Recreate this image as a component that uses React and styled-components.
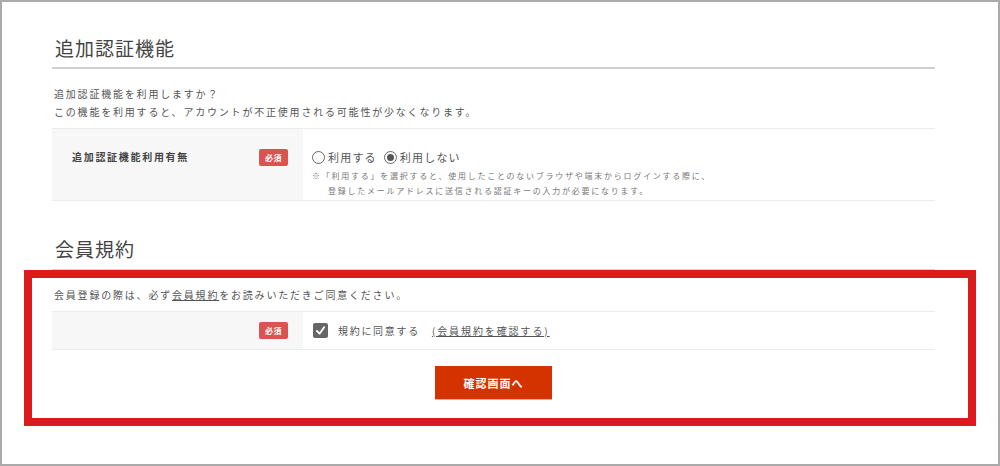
import React, { useState } from 'react';
import styled, { createGlobalStyle } from 'styled-components';

const GlobalStyle = createGlobalStyle`
  body {
    margin: 0;
    background: #fff;
    font-family: "Noto Sans CJK JP", "Noto Sans", sans-serif;
    color: #555;
  }
`;

const Frame = styled.div`
  position: relative;
  width: 1000px;
  height: 466px;
  box-sizing: border-box;
  border: 2px solid #aaa;
  background: #fff;
  overflow: hidden;
`;

const Column = styled.div`
  width: 883px;
  margin-left: 50px;
  padding-top: 31px;
`;

const Heading = styled.h2`
  margin: ${(p) => (p.$first ? '0' : '33px 0 0')};
  padding-bottom: ${(p) => (p.$first ? '4px' : '5px')};
  border-bottom: 2px solid #cfcfcf;
  font-size: 19px;
  font-weight: 400;
  line-height: 30px;
  letter-spacing: 1px;
  color: #444;
  padding-left: 3px;
`;

const Lead = styled.p`
  margin: ${(p) => (p.$tight ? '15px' : '16px')} 0 7px;
  font-size: 10px;
  line-height: 18px;
  letter-spacing: 1.8px;
  color: #555;
  padding-left: 2px;

  a {
    color: #555;
    text-decoration: underline;
  }
`;

const Row = styled.div`
  display: flex;
  border-top: 1px solid #ebebeb;
  border-bottom: 1px solid #ebebeb;
  min-height: ${(p) => p.$min || 0}px;
`;

const LabelCell = styled.div`
  width: 251px;
  flex: none;
  box-sizing: border-box;
  background: #f7f7f7;
  display: flex;
  align-items: ${(p) => (p.$center ? 'center' : 'flex-start')};
  justify-content: space-between;
  padding: ${(p) => (p.$center ? '0 15px 0 20px' : '19px 15px 0 20px')};
`;

const LabelText = styled.span`
  font-size: 10px;
  font-weight: 700;
  line-height: 18px;
  letter-spacing: 1.7px;
  color: #444;
`;

const Badge = styled.span`
  display: inline-flex;
  align-items: center;
  justify-content: center;
  width: 29px;
  height: 17px;
  border-radius: 2px;
  background: #d9534f;
  color: #fff;
  font-size: 8px;
  letter-spacing: 0.5px;
  font-weight: 700;
  margin-top: ${(p) => (p.$center ? 0 : '1px')};
`;

const ValueCell = styled.div`
  flex: 1;
  padding: ${(p) => (p.$center ? '0 0 0 10px' : '19px 0 2px 9px')};
  display: flex;
  flex-direction: ${(p) => (p.$center ? 'row' : 'column')};
  align-items: ${(p) => (p.$center ? 'center' : 'flex-start')};
`;

const RadioGroup = styled.div`
  display: flex;
  align-items: center;
  gap: 7px;
  height: 18px;
`;

const Choice = styled.label`
  display: inline-flex;
  align-items: center;
  gap: 3px;
  font-size: 11px;
  letter-spacing: 1.2px;
  color: #555;
  cursor: pointer;
`;

const RadioMark = styled.span`
  width: 13px;
  height: 13px;
  border-radius: 50%;
  border: 1px solid #666;
  box-sizing: border-box;
  display: inline-flex;
  align-items: center;
  justify-content: center;

  &::after {
    content: '';
    width: 7px;
    height: 7px;
    border-radius: 50%;
    background: ${(p) => (p.$on ? '#555' : 'transparent')};
  }
`;

const Note = styled.p`
  margin: 2px 0 0;
  font-size: 8px;
  line-height: 15px;
  letter-spacing: 1.75px;
  color: #777;

  span {
    display: block;
    padding-left: 16px;
  }
`;

const CheckBox = styled.span`
  width: 15px;
  height: 15px;
  border-radius: 2px;
  background: #666;
  display: inline-flex;
  align-items: center;
  justify-content: center;
  margin-right: 10px;
`;

const AgreeText = styled.span`
  font-size: 10px;
  letter-spacing: 1.7px;
  color: #555;
  margin-right: 12px;
`;

const TermsLink = styled.a`
  font-size: 10px;
  letter-spacing: 1.9px;
  color: #555;
  text-decoration: underline;
`;

const Actions = styled.div`
  display: flex;
  justify-content: center;
  padding-top: 16px;
`;

const SubmitButton = styled.button`
  width: 117px;
  height: 34px;
  border: none;
  border-bottom: 1px solid #f2a88c;
  background: #d43300;
  color: #fff;
  font-family: inherit;
  font-size: 11px;
  font-weight: 700;
  letter-spacing: 1px;
  cursor: pointer;
`;

const Highlight = styled.div`
  position: absolute;
  left: 22px;
  top: 268px;
  width: 952px;
  height: 156px;
  box-sizing: border-box;
  border: 8px solid #dc1c1c;
  pointer-events: none;
`;

const App = () => {
  const [useAuth, setUseAuth] = useState(false);

  return (
    <>
      <GlobalStyle />
      <Frame>
        <Column>
          <Heading $first>追加認証機能</Heading>
          <Lead>
            追加認証機能を利用しますか？
            <br />
            この機能を利用すると、アカウントが不正使用される可能性が少なくなります。
          </Lead>
          <Row>
            <LabelCell>
              <LabelText>追加認証機能利用有無</LabelText>
              <Badge>必須</Badge>
            </LabelCell>
            <ValueCell>
              <RadioGroup>
                <Choice onClick={() => setUseAuth(true)}>
                  <RadioMark $on={useAuth} />
                  利用する
                </Choice>
                <Choice onClick={() => setUseAuth(false)}>
                  <RadioMark $on={!useAuth} />
                  利用しない
                </Choice>
              </RadioGroup>
              <Note>
                ※「利用する」を選択すると、使用したことのないブラウザや端末からログインする際に、
                <span>登録したメールアドレスに送信される認証キーの入力が必要になります。</span>
              </Note>
            </ValueCell>
          </Row>

          <Heading>会員規約</Heading>
          <Lead $tight>
            会員登録の際は、必ず<a href="#">会員規約</a>をお読みいただきご同意ください。
          </Lead>
          <Row $min={37}>
            <LabelCell $center>
              <span />
              <Badge $center>必須</Badge>
            </LabelCell>
            <ValueCell $center>
              <CheckBox>
                <svg width="11" height="11" viewBox="0 0 12 12">
                  <polyline points="2,6.5 5,9.5 10,2.5" fill="none" stroke="#fff" strokeWidth="2" strokeLinecap="round" strokeLinejoin="round" />
                </svg>
              </CheckBox>
              <AgreeText>規約に同意する</AgreeText>
              <TermsLink href="#">(会員規約を確認する)</TermsLink>
            </ValueCell>
          </Row>
          <Actions>
            <SubmitButton>確認画面へ</SubmitButton>
          </Actions>
        </Column>
        <Highlight />
      </Frame>
    </>
  );
};

export default App;
